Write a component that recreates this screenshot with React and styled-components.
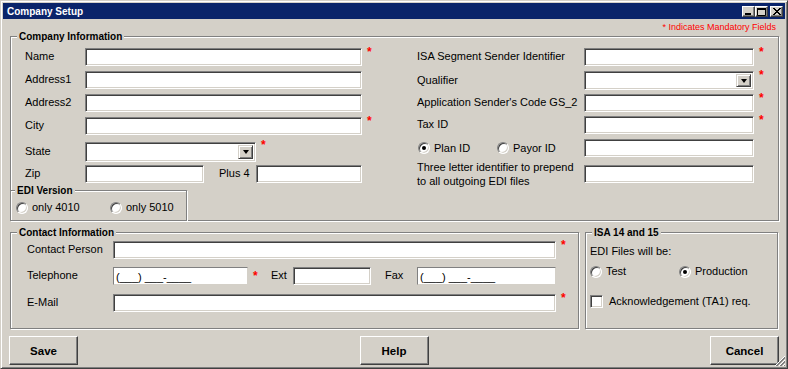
import styled, { createGlobalStyle } from 'styled-components';

const GlobalStyle = createGlobalStyle`
  html, body {
    margin: 0;
    padding: 0;
    background: #D4D0C8;
  }
  body {
    font-family: "Liberation Sans", Arial, sans-serif;
    font-size: 11px;
    color: #000000;
  }
  * {
    box-sizing: border-box;
  }
`;

export default function App() {
    return (
        <>
            <GlobalStyle />
            <Window>
                <TitleBar>
                    <Title>Company Setup</Title>
                    <CaptionButton>
                        <svg width="11" height="9" viewBox="0 0 11 9"><rect x="2" y="6" width="6" height="2" fill="#000" /></svg>
                    </CaptionButton>
                    <CaptionButton>
                        <svg width="11" height="9" viewBox="0 0 11 9"><path d="M1.5 1.5h8v7h-8z" fill="none" stroke="#000" /><rect x="1" y="1" width="9" height="2" fill="#000" /></svg>
                    </CaptionButton>
                    <CaptionButton $close>
                        <svg width="11" height="9" viewBox="0 0 11 9"><path d="M2 1l7 7M3 1l7 7M9 1l-7 7M10 1l-7 7" stroke="#000" strokeWidth="1" /></svg>
                    </CaptionButton>
                </TitleBar>

                <Body>
                    <Note>* Indicates Mandatory Fields</Note>

                    <Group $h={185} $mt={3}>
                        <Legend $left={6}>Company Information</Legend>
                        <Columns>
                            <Column $w={392}>
                                <Row>
                                    <Label $w={60}>Name</Label>
                                    <TextBox $w={277} />
                                    <Req>*</Req>
                                </Row>
                                <Row $mt={5}>
                                    <Label $w={60}>Address1</Label>
                                    <TextBox $w={277} />
                                </Row>
                                <Row $mt={5}>
                                    <Label $w={60}>Address2</Label>
                                    <TextBox $w={277} />
                                </Row>
                                <Row $mt={5}>
                                    <Label $w={60}>City</Label>
                                    <TextBox $w={277} />
                                    <Req>*</Req>
                                </Row>
                                <Row $mt={7} $h={20}>
                                    <Label $w={60}>State</Label>
                                    <Combo $w={171} $h={20}><DropButton /></Combo>
                                    <Req $up>*</Req>
                                </Row>
                                <Row $mt={3}>
                                    <Label $w={60}>Zip</Label>
                                    <TextBox $w={119} />
                                    <Label $w={37} $ml={15}>Plus 4</Label>
                                    <TextBox $w={106} />
                                </Row>
                            </Column>
                            <Column>
                                <Row>
                                    <Label $w={167}>ISA Segment Sender Identifier</Label>
                                    <TextBox $w={170} />
                                    <Req>*</Req>
                                </Row>
                                <Row $mt={5} $h={19}>
                                    <Label $w={167}>Qualifier</Label>
                                    <Combo $w={170} $h={19}><DropButton /></Combo>
                                    <Req>*</Req>
                                </Row>
                                <Row $mt={4}>
                                    <Label $w={167}>Application Sender's Code GS_2</Label>
                                    <TextBox $w={170} />
                                    <Req>*</Req>
                                </Row>
                                <Row $mt={4}>
                                    <Label $w={167}>Tax ID</Label>
                                    <TextBox $w={170} />
                                    <Req>*</Req>
                                </Row>
                                <Row $mt={5}>
                                    <RadioGroup $w={167}>
                                        <Choice $w={79}><Radio $checked />Plan ID</Choice>
                                        <Choice><Radio />Payor ID</Choice>
                                    </RadioGroup>
                                    <TextBox $w={170} />
                                </Row>
                                <Row $mt={3} $h={28}>
                                    <Label $w={167} $lines>Three letter identifier to prepend<br />to all outgoing EDI files</Label>
                                    <TextBox $w={170} />
                                </Row>
                            </Column>
                        </Columns>

                        <EdiBox>
                            <Legend $left={4}>EDI Version</Legend>
                            <Choice $w={94}><Radio />only 4010</Choice>
                            <Choice><Radio />only 5010</Choice>
                        </EdiBox>
                    </Group>

                    <BottomRow>
                        <Group $h={97} $w={569} $pad="8px 0 0 16px">
                            <Legend $left={6}>Contact Information</Legend>
                            <Row>
                                <Label $w={86}>Contact Person</Label>
                                <TextBox $w={443} />
                                <Req>*</Req>
                            </Row>
                            <Row $mt={8}>
                                <Label $w={86}>Telephone</Label>
                                <MaskBox $w={135} defaultValue="(___) ___-____" />
                                <ReqCell $w={23}><Req $mid>*</Req></ReqCell>
                                <Label $w={22}>Ext</Label>
                                <TextBox $w={78} />
                                <Label $w={32} $ml={14}>Fax</Label>
                                <MaskBox $w={139} defaultValue="(___) ___-____" />
                            </Row>
                            <Row $mt={9}>
                                <Label $w={86}>E-Mail</Label>
                                <TextBox $w={443} />
                                <Req>*</Req>
                            </Row>
                        </Group>

                        <Group $h={97} $w={193} $pad="12px 0 0 4px">
                            <Legend $left={6}>ISA 14 and 15</Legend>
                            <Text>EDI Files will be:</Text>
                            <Line $mt={7}>
                                <Choice $w={89}><Radio />Test</Choice>
                                <Choice><Radio $checked />Production</Choice>
                            </Line>
                            <Line $mt={17}>
                                <Choice><Check />Acknowledgement (TA1) req.</Choice>
                            </Line>
                        </Group>
                    </BottomRow>

                    <ButtonRow>
                        <Button>Save</Button>
                        <Button>Help</Button>
                        <Button>Cancel</Button>
                    </ButtonRow>
                </Body>

                <Grip>
                    <svg width="12" height="12" viewBox="0 0 12 12">
                        <path d="M11 1L1 11M11 5L5 11M11 9L9 11" stroke="#FFFFFF" />
                        <path d="M11 2L2 11M11 3L3 11M11 6L6 11M11 7L7 11M11 10L10 11" stroke="#808080" />
                    </svg>
                </Grip>
            </Window>
        </>
    );
}

const Window = styled.div`
    position: relative;
    width: 788px;
    height: 369px;
    padding: 2px;
    display: flex;
    flex-direction: column;
    background: #D4D0C8;
    border: 1px solid;
    border-color: #D4D0C8 #404040 #404040 #D4D0C8;
    box-shadow: inset 1px 1px 0 #FFFFFF, inset -1px -1px 0 #808080;
`;

const TitleBar = styled.div`
    height: 16px;
    padding: 0 2px;
    display: flex;
    align-items: center;
    background: #0A246A;
`;

const Title = styled.div`
    flex: 1;
    padding-left: 2px;
    font-size: 10px;
    font-weight: bold;
    color: #FFFFFF;
`;

const CaptionButton = styled.div`
    width: 13px;
    height: 11px;
    margin-left: ${({$close}) => $close ? '2px' : '0'};
    display: flex;
    justify-content: center;
    align-items: center;
    background: #D4D0C8;
    border: 1px solid;
    border-color: #FFFFFF #404040 #404040 #FFFFFF;
    box-shadow: inset -1px -1px 0 #808080;
`;

const Body = styled.div`
    flex: 1;
    padding: 0 6px 0 7px;
    display: flex;
    flex-direction: column;
`;

const Note = styled.div`
    margin-top: 3px;
    margin-right: 3px;
    height: 11px;
    line-height: 11px;
    text-align: right;
    font-size: 9px;
    color: #FF0000;
`;

const Group = styled.div`
    position: relative;
    width: ${({$w}) => $w ? `${$w}px` : 'auto'};
    height: ${({$h}) => $h}px;
    margin-top: ${({$mt}) => $mt || 0}px;
    padding: ${({$pad}) => $pad || '11px 0 0 14px'};
    border: 1px solid #808080;
    box-shadow: 1px 1px 0 #FFFFFF, inset 1px 1px 0 #FFFFFF;
`;

const Legend = styled.span`
    position: absolute;
    top: -7px;
    left: ${({$left}) => $left}px;
    padding: 0 2px;
    line-height: 13px;
    font-size: 10px;
    font-weight: bold;
    background: #D4D0C8;
`;

const Columns = styled.div`
    display: flex;
`;

const Column = styled.div`
    width: ${({$w}) => $w ? `${$w}px` : 'auto'};
    flex: ${({$w}) => $w ? 'none' : '1'};
    display: flex;
    flex-direction: column;
`;

const Row = styled.div`
    height: ${({$h}) => $h || 18}px;
    margin-top: ${({$mt}) => $mt || 0}px;
    display: flex;
    align-items: center;
`;

const Label = styled.span`
    width: ${({$w}) => $w}px;
    margin-left: ${({$ml}) => $ml || 0}px;
    flex: none;
    white-space: nowrap;
    line-height: ${({$lines}) => $lines ? '14px' : '13px'};
    padding-bottom: ${({$lines}) => $lines ? '0' : '1px'};
`;

const TextBox = styled.input`
    width: ${({$w}) => $w}px;
    height: 18px;
    flex: none;
    padding: 0 3px;
    font: inherit;
    outline: none;
    background: #FFFFFF;
    border: 1px solid;
    border-color: #808080 #FFFFFF #FFFFFF #808080;
    box-shadow: inset 1px 1px 0 #404040, inset -1px -1px 0 #D4D0C8;
`;

const MaskBox = styled.input`
    width: ${({$w}) => $w}px;
    height: 18px;
    flex: none;
    padding: 1px 0 0 2px;
    font: inherit;
    outline: none;
    color: #000000;
    background: #FFFFFF;
    border: 1px solid;
    border-color: #808080 #D4D0C8 #D4D0C8 #808080;
`;

const Combo = styled.div`
    width: ${({$w}) => $w}px;
    height: ${({$h}) => $h}px;
    flex: none;
    padding: 2px;
    display: flex;
    justify-content: flex-end;
    background: #FFFFFF;
    border: 1px solid;
    border-color: #808080 #FFFFFF #FFFFFF #808080;
    box-shadow: inset 1px 1px 0 #404040, inset -1px -1px 0 #D4D0C8;
`;

const DropButton = styled.div`
    width: 15px;
    height: 100%;
    display: flex;
    justify-content: center;
    align-items: center;
    background: #D4D0C8;
    border: 1px solid;
    border-color: #D4D0C8 #404040 #404040 #D4D0C8;
    box-shadow: inset 1px 1px 0 #FFFFFF, inset -1px -1px 0 #808080;

    &::after {
        content: '';
        border-left: 3.5px solid transparent;
        border-right: 3.5px solid transparent;
        border-top: 4px solid #000000;
    }
`;

const Req = styled.span`
    align-self: ${({$mid}) => $mid ? 'center' : 'flex-start'};
    margin-left: 5px;
    margin-top: ${({$up}) => $up ? '-3px' : '-2px'};
    height: 10px;
    line-height: 12px;
    font-size: 12px;
    font-weight: bold;
    color: #FF0000;
`;

const ReqCell = styled.span`
    width: ${({$w}) => $w}px;
    height: 100%;
    flex: none;
    display: flex;
    align-items: center;
`;

const RadioGroup = styled.div`
    width: ${({$w}) => $w}px;
    padding-left: 1px;
    flex: none;
    display: flex;
    align-items: center;
`;

const Choice = styled.label`
    width: ${({$w}) => $w ? `${$w}px` : 'auto'};
    flex: none;
    display: flex;
    align-items: center;
    gap: 4px;
    white-space: nowrap;
    line-height: 13px;
`;

const Radio = styled.span`
    position: relative;
    width: 12px;
    height: 12px;
    flex: none;
    border-radius: 50%;
    background: #FFFFFF;
    border: 1px solid;
    border-color: #808080 #FFFFFF #FFFFFF #808080;
    box-shadow: inset 1px 1px 0 #404040, inset -1px -1px 0 #D4D0C8;

    &::after {
        content: '';
        display: ${({$checked}) => $checked ? 'block' : 'none'};
        position: absolute;
        left: 3px;
        top: 3px;
        width: 4px;
        height: 4px;
        border-radius: 50%;
        background: #000000;
    }
`;

const Check = styled.span`
    width: 13px;
    height: 13px;
    flex: none;
    margin-right: 2px;
    background: #FFFFFF;
    border: 1px solid;
    border-color: #808080 #FFFFFF #FFFFFF #808080;
    box-shadow: inset 1px 1px 0 #404040, inset -1px -1px 0 #D4D0C8;
`;

const EdiBox = styled.div`
    position: absolute;
    left: -1px;
    bottom: -1px;
    width: 177px;
    height: 31px;
    padding: 10px 0 0 5px;
    display: flex;
    align-items: flex-start;
    background: #D4D0C8;
    border: 1px solid #808080;
    box-shadow: 1px 1px 0 #FFFFFF, inset 1px 1px 0 #FFFFFF;
`;

const BottomRow = styled.div`
    margin-top: 11px;
    display: flex;
    gap: 6px;
`;

const Text = styled.div`
    line-height: 13px;
`;

const Line = styled.div`
    margin-top: ${({$mt}) => $mt}px;
    display: flex;
    align-items: center;
`;

const ButtonRow = styled.div`
    margin: 7px 0 0 -1px;
    display: flex;
    justify-content: space-between;
`;

const Button = styled.button`
    width: 69px;
    height: 29px;
    padding: 0;
    font-family: "Liberation Sans", Arial, sans-serif;
    font-size: 11.5px;
    font-weight: bold;
    color: #000000;
    background: #D4D0C8;
    border: 1px solid;
    border-color: #FFFFFF #404040 #404040 #FFFFFF;
    box-shadow: inset -1px -1px 0 #808080;

    :hover {
        cursor: pointer;
    }
`;

const Grip = styled.div`
    position: absolute;
    right: 1px;
    bottom: 1px;
    width: 12px;
    height: 12px;
    display: flex;
`;
